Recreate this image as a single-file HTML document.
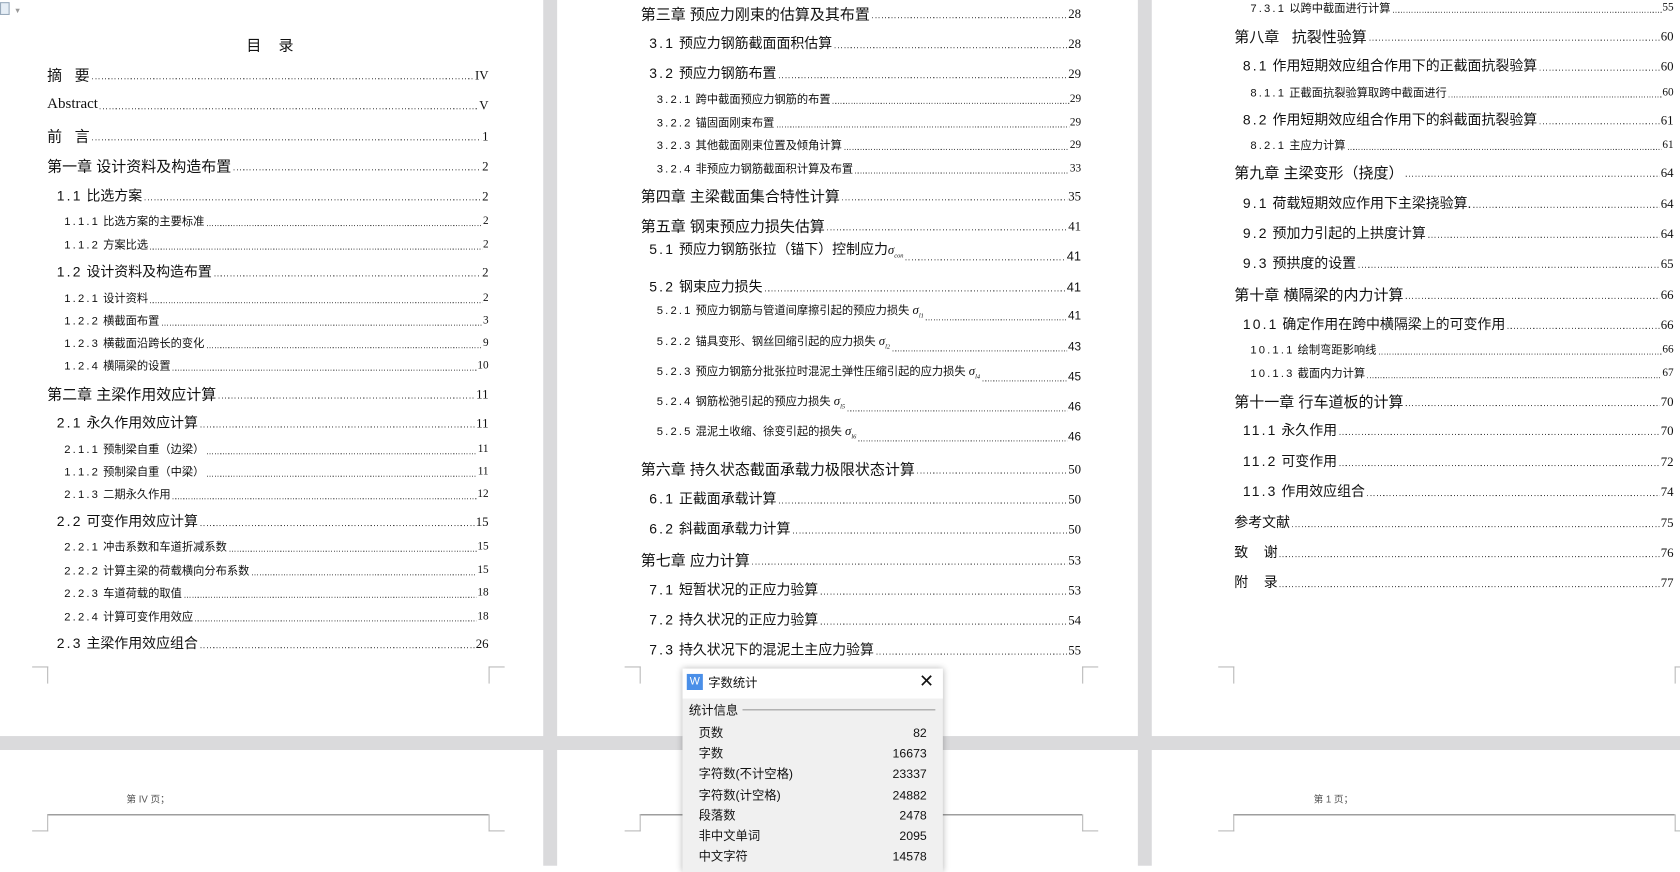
<!DOCTYPE html>
<html><head><meta charset="utf-8">
<style>
html,body{margin:0;padding:0;width:1680px;height:866px;overflow:hidden;background:#fff}
#w{position:absolute;left:0;top:0;width:1568px;height:808px;transform:scale(1.07143);transform-origin:0 0;font-family:"Liberation Sans","Noto Sans CJK SC",sans-serif;color:#111}
.g{position:absolute;background:#dadadc}
.r{position:absolute;display:flex;align-items:flex-end;height:18px;line-height:18px;white-space:nowrap}
.r .d{flex:1;height:1px;margin:0 1px 5px 2px;background:repeating-linear-gradient(to right,#444 0 1px,transparent 1px 3px)}
.r.t .d{margin-bottom:5px;background:repeating-linear-gradient(to right,#555 0 1px,transparent 1px 2.5px)}
.c{font-size:14px}.s{font-size:13px}.t{font-size:10.5px}
.n{font-family:"Liberation Serif",serif;font-size:12px}
.t .n{font-size:10.5px}
.cm{position:absolute;width:14px;height:15px;border-color:#b8b8b8;border-style:solid;border-width:0}
i.sg{font-family:"Liberation Serif",serif;font-size:12px}
i.sg sub{font-size:6px}
b{font-weight:normal;letter-spacing:2px}
</style></head><body><div id="w">
<div class="g" style="left:507px;top:0;width:13px;height:808px"></div>
<div class="g" style="left:1062px;top:0;width:13px;height:808px"></div>
<div class="g" style="left:0;top:687px;width:1568px;height:13px"></div>

<div style="position:absolute;left:0;top:2px;width:7px;height:10px;border:1px solid #9ab;background:#e6eef6"></div>
<div style="position:absolute;left:13px;top:7px;font-size:7px;color:#999">▼</div>

<!-- PAGE 1 -->
<div style="position:absolute;left:230px;top:32px;font-size:14px;letter-spacing:6px">目 录</div>
<div class="r c" style="left:44px;width:412px;top:61px"><span>摘&nbsp;&nbsp;&nbsp;要</span><span class="d"></span><span class="n">IV</span></div>
<div class="r c" style="left:44px;width:412px;top:89px"><span class="n" style="font-size:14px">Abstract</span><span class="d"></span><span class="n">V</span></div>
<div class="r c" style="left:44px;width:412px;top:118px"><span>前&nbsp;&nbsp;&nbsp;言</span><span class="d"></span><span class="n">1</span></div>
<div class="r c" style="left:44px;width:412px;top:146px"><span>第一章 设计资料及构造布置</span><span class="d"></span><span class="n">2</span></div>
<div class="r s" style="left:53px;width:403px;top:174px"><span><b>1.1</b> 比选方案</span><span class="d"></span><span class="n">2</span></div>
<div class="r t" style="left:60px;width:396px;top:198px"><span><b>1.1.1</b> 比选方案的主要标准</span><span class="d"></span><span class="n">2</span></div>
<div class="r t" style="left:60px;width:396px;top:220px"><span><b>1.1.2</b> 方案比选</span><span class="d"></span><span class="n">2</span></div>
<div class="r s" style="left:53px;width:403px;top:245px"><span><b>1.2</b> 设计资料及构造布置</span><span class="d"></span><span class="n">2</span></div>
<div class="r t" style="left:60px;width:396px;top:270px"><span><b>1.2.1</b> 设计资料</span><span class="d"></span><span class="n">2</span></div>
<div class="r t" style="left:60px;width:396px;top:291px"><span><b>1.2.2</b> 横截面布置</span><span class="d"></span><span class="n">3</span></div>
<div class="r t" style="left:60px;width:396px;top:312px"><span><b>1.2.3</b> 横截面沿跨长的变化</span><span class="d"></span><span class="n">9</span></div>
<div class="r t" style="left:60px;width:396px;top:333px"><span><b>1.2.4</b> 横隔梁的设置</span><span class="d"></span><span class="n">10</span></div>
<div class="r c" style="left:44px;width:412px;top:359px"><span>第二章 主梁作用效应计算</span><span class="d"></span><span class="n">11</span></div>
<div class="r s" style="left:53px;width:403px;top:386px"><span><b>2.1</b> 永久作用效应计算</span><span class="d"></span><span class="n">11</span></div>
<div class="r t" style="left:60px;width:396px;top:411px"><span><b>2.1.1</b> 预制梁自重（边梁）</span><span class="d"></span><span class="n">11</span></div>
<div class="r t" style="left:60px;width:396px;top:432px"><span><b>1.1.2</b> 预制梁自重（中梁）</span><span class="d"></span><span class="n">11</span></div>
<div class="r t" style="left:60px;width:396px;top:453px"><span><b>2.1.3</b> 二期永久作用</span><span class="d"></span><span class="n">12</span></div>
<div class="r s" style="left:53px;width:403px;top:478px"><span><b>2.2</b> 可变作用效应计算</span><span class="d"></span><span class="n">15</span></div>
<div class="r t" style="left:60px;width:396px;top:502px"><span><b>2.2.1</b> 冲击系数和车道折减系数</span><span class="d"></span><span class="n">15</span></div>
<div class="r t" style="left:60px;width:396px;top:524px"><span><b>2.2.2</b> 计算主梁的荷载横向分布系数</span><span class="d"></span><span class="n">15</span></div>
<div class="r t" style="left:60px;width:396px;top:545px"><span><b>2.2.3</b> 车道荷载的取值</span><span class="d"></span><span class="n">18</span></div>
<div class="r t" style="left:60px;width:396px;top:567px"><span><b>2.2.4</b> 计算可变作用效应</span><span class="d"></span><span class="n">18</span></div>
<div class="r s" style="left:53px;width:403px;top:592px"><span><b>2.3</b> 主梁作用效应组合</span><span class="d"></span><span class="n">26</span></div>
<div class="cm" style="left:30px;top:622px;border-top-width:1px;border-right-width:1px"></div>
<div class="cm" style="left:456px;top:622px;border-top-width:1px;border-left-width:1px"></div>
<div style="position:absolute;left:118px;top:739px;font-size:9px;color:#555">第 IV 页；</div>
<div style="position:absolute;left:44px;top:760px;width:412px;border-top:1px solid #777"></div>
<div class="cm" style="left:30px;top:760px;border-bottom-width:1px;border-right-width:1px"></div>
<div class="cm" style="left:456px;top:760px;border-bottom-width:1px;border-left-width:1px"></div>

<!-- PAGE 2 -->
<div class="r c" style="left:598px;width:411px;top:4px"><span>第三章 预应力刚束的估算及其布置</span><span class="d"></span><span class="n">28</span></div>
<div class="r s" style="left:606px;width:403px;top:32px"><span><b>3.1</b> 预应力钢筋截面面积估算</span><span class="d"></span><span class="n">28</span></div>
<div class="r s" style="left:606px;width:403px;top:60px"><span><b>3.2</b> 预应力钢筋布置</span><span class="d"></span><span class="n">29</span></div>
<div class="r t" style="left:613px;width:396px;top:84px"><span><b>3.2.1</b> 跨中截面预应力钢筋的布置</span><span class="d"></span><span class="n">29</span></div>
<div class="r t" style="left:613px;width:396px;top:106px"><span><b>3.2.2</b> 锚固面刚束布置</span><span class="d"></span><span class="n">29</span></div>
<div class="r t" style="left:613px;width:396px;top:127px"><span><b>3.2.3</b> 其他截面刚束位置及倾角计算</span><span class="d"></span><span class="n">29</span></div>
<div class="r t" style="left:613px;width:396px;top:149px"><span><b>3.2.4</b> 非预应力钢筋截面积计算及布置</span><span class="d"></span><span class="n">33</span></div>
<div class="r c" style="left:598px;width:411px;top:174px"><span>第四章 主梁截面集合特性计算</span><span class="d"></span><span class="n">35</span></div>
<div class="r c" style="left:598px;width:411px;top:202px"><span>第五章 钢束预应力损失估算</span><span class="d"></span><span class="n">41</span></div>
<div class="r s" style="left:606px;width:403px;top:230px"><span><b>5.1</b> 预应力钢筋张拉（锚下）控制应力<i class="sg">σ<sub>con</sub></i></span><span class="d"></span><span style="font-size:12px">41</span></div>
<div class="r s" style="left:606px;width:403px;top:259px"><span><b>5.2</b> 钢束应力损失</span><span class="d"></span><span style="font-size:12px">41</span></div>
<div class="r t" style="left:613px;width:396px;top:286px"><span><b>5.2.1</b> 预应力钢筋与管道间摩擦引起的预应力损失 <i class="sg">σ<sub>l1</sub></i></span><span class="d"></span><span style="font-size:11px">41</span></div>
<div class="r t" style="left:613px;width:396px;top:315px"><span><b>5.2.2</b> 锚具变形、钢丝回缩引起的应力损失 <i class="sg">σ<sub>l2</sub></i></span><span class="d"></span><span style="font-size:11px">43</span></div>
<div class="r t" style="left:613px;width:396px;top:343px"><span><b>5.2.3</b> 预应力钢筋分批张拉时混泥土弹性压缩引起的应力损失 <i class="sg">σ<sub>l4</sub></i></span><span class="d"></span><span style="font-size:11px">45</span></div>
<div class="r t" style="left:613px;width:396px;top:371px"><span><b>5.2.4</b> 钢筋松弛引起的预应力损失 <i class="sg">σ<sub>l5</sub></i></span><span class="d"></span><span style="font-size:11px">46</span></div>
<div class="r t" style="left:613px;width:396px;top:399px"><span><b>5.2.5</b> 混泥土收缩、徐变引起的损失 <i class="sg">σ<sub>l6</sub></i></span><span class="d"></span><span style="font-size:11px">46</span></div>
<div class="r c" style="left:598px;width:411px;top:429px"><span>第六章 持久状态截面承载力极限状态计算</span><span class="d"></span><span class="n">50</span></div>
<div class="r s" style="left:606px;width:403px;top:457px"><span><b>6.1</b> 正截面承载计算</span><span class="d"></span><span class="n">50</span></div>
<div class="r s" style="left:606px;width:403px;top:485px"><span><b>6.2</b> 斜截面承载力计算</span><span class="d"></span><span class="n">50</span></div>
<div class="r c" style="left:598px;width:411px;top:514px"><span>第七章 应力计算</span><span class="d"></span><span class="n">53</span></div>
<div class="r s" style="left:606px;width:403px;top:542px"><span><b>7.1</b> 短暂状况的正应力验算</span><span class="d"></span><span class="n">53</span></div>
<div class="r s" style="left:606px;width:403px;top:570px"><span><b>7.2</b> 持久状况的正应力验算</span><span class="d"></span><span class="n">54</span></div>
<div class="r s" style="left:606px;width:403px;top:598px"><span><b>7.3</b> 持久状况下的混泥土主应力验算</span><span class="d"></span><span class="n">55</span></div>
<div class="cm" style="left:583px;top:622px;border-top-width:1px;border-right-width:1px"></div>
<div class="cm" style="left:1010px;top:622px;border-top-width:1px;border-left-width:1px"></div>
<div style="position:absolute;left:597px;top:760px;width:413px;border-top:1px solid #777"></div>
<div class="cm" style="left:583px;top:760px;border-bottom-width:1px;border-right-width:1px"></div>
<div class="cm" style="left:1010px;top:760px;border-bottom-width:1px;border-left-width:1px"></div>

<!-- PAGE 3 -->
<div class="r t" style="left:1167px;width:395px;top:-1px"><span><b>7.3.1</b> 以跨中截面进行计算</span><span class="d"></span><span class="n">55</span></div>
<div class="r c" style="left:1152px;width:410px;top:25px"><span>第八章&nbsp;&nbsp; 抗裂性验算</span><span class="d"></span><span class="n">60</span></div>
<div class="r s" style="left:1160px;width:402px;top:53px"><span><b>8.1</b> 作用短期效应组合作用下的正截面抗裂验算</span><span class="d"></span><span class="n">60</span></div>
<div class="r t" style="left:1167px;width:395px;top:78px"><span><b>8.1.1</b> 正截面抗裂验算取跨中截面进行</span><span class="d"></span><span class="n">60</span></div>
<div class="r s" style="left:1160px;width:402px;top:103px"><span><b>8.2</b> 作用短期效应组合作用下的斜截面抗裂验算</span><span class="d"></span><span class="n">61</span></div>
<div class="r t" style="left:1167px;width:395px;top:127px"><span><b>8.2.1</b> 主应力计算</span><span class="d"></span><span class="n">61</span></div>
<div class="r c" style="left:1152px;width:410px;top:152px"><span>第九章 主梁变形（挠度）</span><span class="d"></span><span class="n">64</span></div>
<div class="r s" style="left:1160px;width:402px;top:181px"><span><b>9.1</b> 荷载短期效应作用下主梁挠验算.</span><span class="d"></span><span class="n">64</span></div>
<div class="r s" style="left:1160px;width:402px;top:209px"><span><b>9.2</b> 预加力引起的上拱度计算</span><span class="d"></span><span class="n">64</span></div>
<div class="r s" style="left:1160px;width:402px;top:237px"><span><b>9.3</b> 预拱度的设置</span><span class="d"></span><span class="n">65</span></div>
<div class="r c" style="left:1152px;width:410px;top:266px"><span>第十章 横隔梁的内力计算</span><span class="d"></span><span class="n">66</span></div>
<div class="r s" style="left:1160px;width:402px;top:294px"><span><b>10.1</b> 确定作用在跨中横隔梁上的可变作用</span><span class="d"></span><span class="n">66</span></div>
<div class="r t" style="left:1167px;width:395px;top:318px"><span><b>10.1.1</b> 绘制弯距影响线</span><span class="d"></span><span class="n">66</span></div>
<div class="r t" style="left:1167px;width:395px;top:340px"><span><b>10.1.3</b> 截面内力计算</span><span class="d"></span><span class="n">67</span></div>
<div class="r c" style="left:1152px;width:410px;top:366px"><span>第十一章 行车道板的计算</span><span class="d"></span><span class="n">70</span></div>
<div class="r s" style="left:1160px;width:402px;top:393px"><span><b>11.1</b> 永久作用</span><span class="d"></span><span class="n">70</span></div>
<div class="r s" style="left:1160px;width:402px;top:422px"><span><b>11.2</b> 可变作用</span><span class="d"></span><span class="n">72</span></div>
<div class="r s" style="left:1160px;width:402px;top:450px"><span><b>11.3</b> 作用效应组合</span><span class="d"></span><span class="n">74</span></div>
<div class="r s" style="left:1152px;width:410px;top:479px"><span>参考文献</span><span class="d"></span><span class="n">75</span></div>
<div class="r s" style="left:1152px;width:410px;top:507px"><span>致&nbsp;&nbsp;&nbsp;&nbsp;谢</span><span class="d"></span><span class="n">76</span></div>
<div class="r s" style="left:1152px;width:410px;top:535px"><span>附&nbsp;&nbsp;&nbsp;&nbsp;录</span><span class="d"></span><span class="n">77</span></div>
<div class="cm" style="left:1137px;top:622px;border-top-width:1px;border-right-width:1px"></div>
<div class="cm" style="left:1563px;top:622px;border-top-width:1px;border-left-width:1px"></div>
<div style="position:absolute;left:1226px;top:739px;font-size:9px;color:#555">第 1 页；</div>
<div style="position:absolute;left:1151px;top:760px;width:412px;border-top:1px solid #777"></div>
<div class="cm" style="left:1137px;top:760px;border-bottom-width:1px;border-right-width:1px"></div>
<div class="cm" style="left:1563px;top:760px;border-bottom-width:1px;border-left-width:1px"></div>

<!-- DIALOG -->
<div style="position:absolute;left:637px;top:624px;width:243px;height:190px;background:#f0f0f0;box-shadow:0 0 6px rgba(0,0,0,.3);font-size:11.5px">
 <div style="height:28px;background:#fff;position:relative">
  <div style="position:absolute;left:4px;top:5px;width:15px;height:15px;background:#4a8fe8;color:#fff;font-size:10px;line-height:15px;text-align:center">W</div>
  <div style="position:absolute;left:24px;top:5px">字数统计</div>
  <div style="position:absolute;right:8px;top:2px;font-size:17px;font-weight:300">✕</div>
 </div>
 <div style="position:absolute;left:6px;top:31px">统计信息</div>
 <div style="position:absolute;left:56px;top:38px;width:180px;border-top:1px solid #999"></div>
 <div style="position:absolute;left:15px;right:15px;top:52px;line-height:19.2px">
  <div style="display:flex;justify-content:space-between"><span>页数</span><span>82</span></div>
  <div style="display:flex;justify-content:space-between"><span>字数</span><span>16673</span></div>
  <div style="display:flex;justify-content:space-between"><span>字符数(不计空格)</span><span>23337</span></div>
  <div style="display:flex;justify-content:space-between"><span>字符数(计空格)</span><span>24882</span></div>
  <div style="display:flex;justify-content:space-between"><span>段落数</span><span>2478</span></div>
  <div style="display:flex;justify-content:space-between"><span>非中文单词</span><span>2095</span></div>
  <div style="display:flex;justify-content:space-between"><span>中文字符</span><span>14578</span></div>
 </div>
</div>
</div></body></html>
